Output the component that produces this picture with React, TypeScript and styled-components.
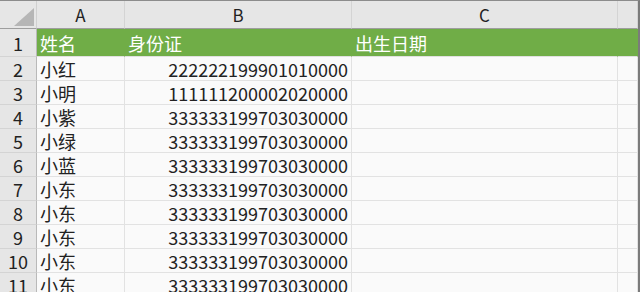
import styled, { createGlobalStyle } from 'styled-components'

const GlobalStyle = createGlobalStyle`
	html, body {
		margin: 0;
		padding: 0;
		background: #ffffff;
	}
	body {
		font-family: 'Noto Sans CJK SC', 'Noto Sans', sans-serif;
		overflow: hidden;
	}
`

const columns = ['A', 'B', 'C', '']
const colWidths = [37, 88, 227, 266, 20]

const header = ['姓名', '身份证', '出生日期', '']

const rows: [string, string][] = [
	['小红', '222222199901010000'],
	['小明', '111111200002020000'],
	['小紫', '333333199703030000'],
	['小绿', '333333199703030000'],
	['小蓝', '333333199703030000'],
	['小东', '333333199703030000'],
	['小东', '333333199703030000'],
	['小东', '333333199703030000'],
	['小东', '333333199703030000'],
	['小东', '333333199703030000'],
]

const App = () => {
	const template = colWidths.map((w) => `${w}px`).join(' ')
	return (
		<>
			<GlobalStyle />
			<Sheet>
				<Row style={{ gridTemplateColumns: template }}>
					<Corner>
						<CornerTriangle />
					</Corner>
					{columns.map((c, i) => (
						<ColHead key={`col-${i}`}>{c}</ColHead>
					))}
				</Row>
				<Row style={{ gridTemplateColumns: template }}>
					<RowHead $tall>1</RowHead>
					{header.map((h, i) => (
						<HeaderCell key={`head-${i}`}>{h}</HeaderCell>
					))}
				</Row>
				{rows.map((r, i) => (
					<Row key={`row-${i}`} style={{ gridTemplateColumns: template }}>
						<RowHead>{i + 2}</RowHead>
						<Cell>{r[0]}</Cell>
						<Cell $align="right">{r[1]}</Cell>
						<Cell />
						<Cell />
					</Row>
				))}
			</Sheet>
		</>
	)
}

export default App

const Sheet = styled.div`
	width: 638px;
	height: 291px;
	overflow: hidden;
	border-top: 1px solid #8c8c8c;
	border-right: 2px solid #7b7b7b;
	background: #fafafa;
`

const Row = styled.div`
	display: grid;
`

const Corner = styled.div`
	height: 27px;
	background: #e6e6e6;
	border-right: 1px solid #d0d0d0;
	border-bottom: 1px solid #9e9e9e;
	position: relative;
`

const CornerTriangle = styled.div`
	position: absolute;
	right: 2px;
	bottom: 2px;
	width: 0;
	height: 0;
	border-left: 20px solid transparent;
	border-bottom: 18px solid #b6b6b6;
`

const ColHead = styled.div`
	height: 27px;
	background: #e6e6e6;
	border-right: 1px solid #d4d4d4;
	border-bottom: 1px solid #9e9e9e;
	display: flex;
	align-items: center;
	justify-content: center;
	font-size: 17px;
	color: #222222;
	line-height: 1;
`

const RowHead = styled.div<{ $tall?: boolean }>`
	height: ${(p) => (p.$tall ? 27 : 23)}px;
	background: #e6e6e6;
	border-right: 1px solid #b9b9b9;
	border-bottom: 1px solid #d4d4d4;
	display: flex;
	align-items: center;
	justify-content: center;
	font-size: 18px;
	color: #222222;
	line-height: 1;
`

const HeaderCell = styled.div`
	height: 27px;
	background: #70ad47;
	border-right: 1px solid #70ad47;
	border-bottom: 1px solid #e0e0e0;
	display: flex;
	align-items: center;
	padding: 0 3px;
	font-size: 18px;
	color: #ffffff;
	white-space: nowrap;
	line-height: 1;
	overflow: hidden;
`

const Cell = styled.div<{ $align?: 'left' | 'right' }>`
	height: 23px;
	border-right: 1px solid #e2e2e2;
	border-bottom: 1px solid #e2e2e2;
	display: flex;
	align-items: center;
	justify-content: ${(p) => (p.$align === 'right' ? 'flex-end' : 'flex-start')};
	padding: 0 3px;
	font-size: 18px;
	color: #222222;
	white-space: nowrap;
	line-height: 1;
	overflow: hidden;
`
